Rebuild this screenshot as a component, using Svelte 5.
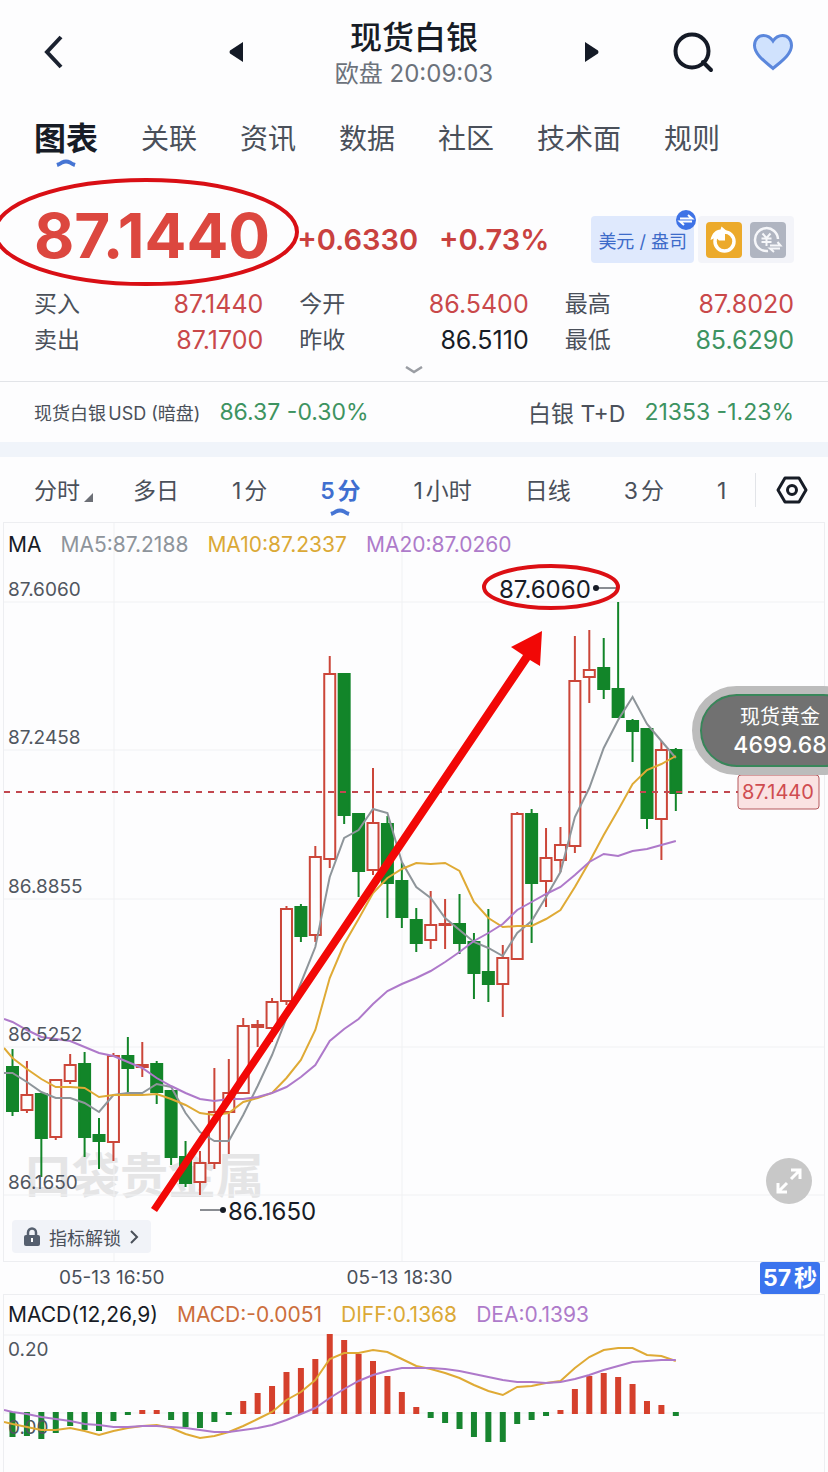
<script lang="ts">
    const tabs = ["图表", "关联", "资讯", "数据", "社区", "技术面", "规则"];
    const periods = ["分时", "多日", "1分", "5分", "1小时", "日线", "3分", "1"];
    let activeTab = $state("图表");
    let activePeriod = $state("5分");

    const quotes = [
        { label: "买入", value: "87.1440", tone: "up" },
        { label: "今开", value: "86.5400", tone: "up" },
        { label: "最高", value: "87.8020", tone: "up" },
        { label: "卖出", value: "87.1700", tone: "up" },
        { label: "昨收", value: "86.5110", tone: "flat" },
        { label: "最低", value: "85.6290", tone: "down" },
    ];

    // x of the first bar and the distance between bars
    const x0 = 12.5;
    const step = 14.42;
    const barX = (i: number) => x0 + i * step;

    // [direction, body top, body bottom, wick top, wick bottom]
    const candles: [string, number, number, number, number][] = [
        ["down", 1067, 1111, 1049, 1116], ["up", 1095, 1110, 1061, 1113], ["down", 1094, 1138, 1094, 1177],
        ["up", 1080, 1137, 1079, 1140], ["up", 1065, 1081, 1054, 1084], ["down", 1064, 1137, 1052, 1157],
        ["down", 1135, 1141, 1118, 1169], ["up", 1056, 1142, 1053, 1161], ["down", 1056, 1068, 1037, 1095],
        ["up", 1065, 1067, 1042, 1077], ["down", 1064, 1092, 1061, 1104], ["down", 1091, 1157, 1091, 1165],
        ["down", 1157, 1183, 1141, 1187], ["up", 1163, 1182, 1151, 1195], ["up", 1112, 1163, 1068, 1169],
        ["up", 1093, 1112, 1059, 1154], ["up", 1026, 1093, 1018, 1094], ["up", 1025, 1027, 1020, 1047],
        ["up", 1002, 1028, 998, 1042], ["up", 909, 1001, 906, 1005], ["down", 907, 936, 904, 942],
        ["up", 857, 935, 846, 942], ["up", 674, 859, 656, 868], ["down", 674, 815, 674, 824],
        ["down", 814, 871, 814, 897], ["up", 823, 870, 768, 875], ["down", 824, 883, 816, 918],
        ["down", 881, 917, 862, 928], ["down", 920, 943, 908, 952], ["up", 925, 940, 891, 949],
        ["up", 924, 925, 899, 949], ["down", 924, 943, 894, 954], ["down", 942, 973, 933, 999],
        ["down", 972, 984, 909, 1002], ["up", 958, 984, 945, 1017], ["up", 814, 959, 812, 960],
        ["down", 814, 883, 809, 943], ["up", 858, 881, 828, 907], ["up", 845, 860, 827, 872],
        ["up", 681, 846, 636, 853], ["up", 670, 677, 630, 703], ["down", 668, 689, 638, 699],
        ["down", 689, 717, 602, 717], ["down", 721, 731, 719, 762], ["down", 729, 818, 729, 829],
        ["up", 750, 819, 741, 860], ["down", 750, 793, 748, 811],
    ];

    const ma5 = [
        1073, 1082, 1092, 1098, 1098, 1103, 1112, 1095, 1093, 1093, 1084, 1087, 1113, 1132, 1141, 1141,
        1115, 1086, 1055, 1018, 983, 947, 877, 838, 830, 809, 813, 862, 887, 898, 918, 930, 942, 948, 956,
        933, 921, 897, 872, 817, 788, 748, 720, 697, 724, 741, 758,
    ];
    const ma10 = [
        1058, 1069, 1079, 1087, 1087, 1088, 1097, 1095, 1095, 1095, 1094, 1099, 1105, 1113, 1115, 1113,
        1102, 1098, 1093, 1078, 1060, 1030, 978, 944, 919, 893, 878, 869, 863, 864, 863, 871, 902, 918, 927,
        926, 926, 919, 910, 887, 862, 835, 810, 784, 770, 764, 756,
    ];
    const ma20 = [
        1022, 1030, 1037, 1039, 1041, 1047, 1053, 1056, 1062, 1068, 1078, 1086, 1093, 1099, 1101, 1099,
        1099, 1097, 1093, 1087, 1077, 1065, 1041, 1029, 1019, 1004, 991, 984, 978, 971, 962, 952, 941, 933,
        924, 910, 902, 894, 887, 875, 862, 854, 856, 851, 849, 845, 841,
    ];

    // far end of each histogram bar; below the base line is negative
    const base = 1413;
    const macd = [
        1437, 1436, 1439, 1433, 1426, 1430, 1431, 1421, 1415, 1410, 1410, 1420, 1427, 1428, 1422, 1415,
        1401, 1393, 1386, 1372, 1368, 1359, 1334, 1340, 1354, 1361, 1376, 1392, 1407, 1418, 1423, 1429,
        1437, 1442, 1442, 1424, 1420, 1416, 1410, 1389, 1376, 1373, 1377, 1384, 1401, 1405, 1416,
    ];
    const diff = [
        1424, 1427, 1430, 1430, 1428, 1431, 1435, 1431, 1428, 1426, 1425, 1428, 1434, 1438, 1436, 1432,
        1426, 1419, 1412, 1400, 1392, 1380, 1359, 1353, 1353, 1350, 1352, 1359, 1366, 1369, 1373, 1378,
        1385, 1391, 1395, 1387, 1386, 1383, 1381, 1368, 1357, 1350, 1348, 1348, 1355, 1356, 1361,
    ];
    const dea = [
        1412, 1414, 1417, 1419, 1421, 1424, 1425, 1427, 1427, 1426, 1426, 1427, 1428, 1430, 1432, 1432,
        1430, 1428, 1425, 1420, 1414, 1408, 1398, 1389, 1381, 1375, 1371, 1368, 1368, 1368, 1369, 1371,
        1374, 1377, 1380, 1382, 1382, 1383, 1382, 1379, 1375, 1370, 1366, 1362, 1361, 1360, 1360,
    ];

    function line(first: number, ys: number[]) {
        return `4,${first} ` + ys.map((y, i) => `${barX(i)},${y}`).join(" ");
    }

    const priceAxis = [
        { y: 602, label: "87.6060" },
        { y: 750, label: "87.2458" },
        { y: 899, label: "86.8855" },
        { y: 1047, label: "86.5252" },
        { y: 1195, label: "86.1650" },
    ];
</script>

<div class="page">
    <header class="topbar">
        <button class="icon-btn back" aria-label="返回">
            <svg width="40" height="40" viewBox="0 0 40 40"><path d="M27 5 13 20l14 15" fill="none" stroke="#1b2230" stroke-width="4" /></svg>
        </button>
        <div class="switcher">
            <button class="icon-btn" aria-label="上一个">
                <svg width="14" height="20" viewBox="0 0 14 20"><path d="M14 0v20L1 11.500q-1-1.500 0-3z" fill="#141a26" /></svg>
            </button>
            <div class="title">
                <h1>现货白银</h1>
                <p>欧盘 20:09:03</p>
            </div>
            <button class="icon-btn" aria-label="下一个">
                <svg width="14" height="20" viewBox="0 0 14 20"><path d="M0 0v20l13-8.500q1-1.500 0-3z" fill="#141a26" /></svg>
            </button>
        </div>
        <div class="actions">
            <button class="icon-btn" aria-label="搜索">
                <svg width="42" height="42" viewBox="0 0 42 42" fill="none" stroke="#141a26" stroke-width="4">
                    <circle cx="20" cy="20" r="16.500" />
                    <path d="m31 31 8 8" stroke-linecap="round" />
                </svg>
            </button>
            <button class="icon-btn" aria-label="收藏">
                <svg width="42" height="38" viewBox="0 0 42 38">
                    <path d="M21 35.500C15 30 2.500 22 2.500 12.500 2.500 6.500 6.500 2.500 11.500 2.500c4.500 0 7.500 2.500 9.500 5.500 2-3 5-5.500 9.500-5.500 5 0 9 4 9 10C39.500 22 27 30 21 35.500z" fill="#d0e2fd" stroke="#5b87dc" stroke-width="3" />
                </svg>
            </button>
        </div>
    </header>

    <nav class="tabs">
        {#each tabs as tab}
            <button class:active={tab === activeTab} onclick={() => (activeTab = tab)}>
                {tab}
                {#if tab === activeTab}
                    <svg class="mark" width="22" height="9" viewBox="0 0 22 9"><path d="M2 7q3-1 5-2.500 4-2 8 0Q17 6 20 7" /></svg>
                {/if}
            </button>
        {/each}
    </nav>

    <section class="quote">
        <div class="price-row">
            <div class="last">
                87.1440
                <svg class="ring" width="308" height="112" viewBox="0 0 308 112"><ellipse cx="154" cy="56" rx="151" ry="52" /></svg>
            </div>
            <div class="change">+0.6330</div>
            <div class="change">+0.73%</div>
            <div class="tools">
                <button class="unit">
                    美元 / 盎司
                    <svg class="swap" width="20" height="20" viewBox="0 0 20 20">
                        <circle cx="10" cy="10" r="10" fill="#3f73e6" />
                        <path d="M4 8.500h12L12 5M16 11.500H4l4 3.500" fill="none" stroke="#fff" stroke-width="2" />
                    </svg>
                </button>
                <div class="modes">
                    <button class="icon-btn" aria-label="走势">
                        <svg width="36" height="36" viewBox="0 0 36 36">
                            <rect width="36" height="36" rx="4" fill="#ecaa2b" />
                            <circle cx="18.500" cy="19.500" r="9.500" fill="none" stroke="#fff" stroke-width="3.500" />
                            <path d="M4.500 18C6 11 10 7.500 14.500 7.500l1-3L22 10l-3 2v6.500h-6l-3-3z" fill="#fff" />
                        </svg>
                    </button>
                    <button class="icon-btn" aria-label="人民币">
                        <svg width="36" height="36" viewBox="0 0 36 36" fill="none" stroke="#f6f7fa" stroke-width="2.500">
                            <rect width="36" height="36" rx="4" fill="#b0b5c1" stroke="none" />
                            <path d="M28 17A11.500 11.500 0 1 0 18 29" />
                            <path d="m12.500 11.500 4 4.500 4-4.500M11.500 16.500h10M11.500 20h10M16.500 16v8" stroke-width="2" />
                            <path d="M20 23.500h10.500L27.500 20M30 26.500H20l4 3.500" stroke-width="2" />
                        </svg>
                    </button>
                </div>
            </div>
        </div>
        <dl class="quotes">
            {#each quotes as q}
                <div>
                    <dt>{q.label}</dt>
                    <dd class={q.tone}>{q.value}</dd>
                </div>
            {/each}
        </dl>
        <button class="icon-btn more" aria-label="展开">
            <svg width="20" height="8" viewBox="0 0 20 8"><path d="m2 1 8 5 8-5" fill="none" stroke="#9a9da3" stroke-width="2.500" /></svg>
        </button>
    </section>

    <section class="related">
        <a href="#usd"><span class="small">现货白银USD (暗盘)</span><span class="down">86.37 -0.30%</span></a>
        <a href="#td"><span>白银 T+D</span><span class="down">21353 -1.23%</span></a>
    </section>

    <nav class="periods">
        <div class="period-list">
            {#each periods as p, i}
                <button class:active={p === activePeriod} onclick={() => (activePeriod = p)}>
                    {p}
                    {#if i === 0}
                        <svg class="corner" width="9" height="9" viewBox="0 0 9 9"><path d="M9 0v9H0z" fill="#6c6f76" /></svg>
                    {/if}
                    {#if p === activePeriod}
                        <svg class="mark" width="22" height="9" viewBox="0 0 22 9"><path d="M2 7q3-1 5-2.500 4-2 8 0Q17 6 20 7" /></svg>
                    {/if}
                </button>
            {/each}
        </div>
        <button class="icon-btn settings" aria-label="设置">
            <svg width="32" height="28" viewBox="0 0 32 28" fill="none" stroke="#171c26" stroke-width="3">
                <path d="M9 2h14l7 12-7 12H9L2 14z" stroke-linejoin="round" />
                <circle cx="16" cy="14" r="4.500" />
            </svg>
        </button>
    </nav>

    <section class="chart">
        <svg class="plot" viewBox="4 523 820 738">
            <text class="watermark" x="24" y="1193">口袋贵金属</text>
            {#each priceAxis as tick}
                <line class="grid" x1="4" x2="824" y1={tick.y} y2={tick.y} />
            {/each}
            <line class="grid" x1="114" x2="114" y1="523" y2="1261" />
            <line class="grid" x1="402" x2="402" y1="523" y2="1261" />
            {#each candles as [dir, top, bottom, high, low], i}
                <g class="candle {dir}">
                    <line x1={barX(i)} x2={barX(i)} y1={high} y2={low} />
                    <rect x={barX(i) - 5.5} y={top} width="11" height={bottom - top} />
                </g>
            {/each}
            <line class="last-line" x1="4" x2="738" y1="792" y2="792" />
            <polyline class="line gray" points={line(1073, ma5)} />
            <polyline class="line gold" points={line(1048, ma10)} />
            <polyline class="line violet" points={line(1019, ma20)} />
            {#each priceAxis as tick}
                <text class="tick" x="8" y={tick.y - 6}>{tick.label}</text>
            {/each}

            <text class="extreme" x="499" y="598">87.6060</text>
            <circle cx="596" cy="588" r="3" fill="#171c26" />
            <line x1="596" x2="618" y1="588" y2="588" stroke="#171c26" />
            <line x1="200" x2="223" y1="1210" y2="1210" stroke="#171c26" />
            <circle cx="223" cy="1210" r="3" fill="#171c26" />
            <text class="extreme" x="228" y="1220">86.1650</text>

            <rect x="738" y="775" width="81" height="34" rx="3" fill="#fae2e2" stroke="#b5595d" />
            <text class="last-tag" x="778" y="799">87.1440</text>

            <ellipse cx="551" cy="587" rx="67" ry="21" fill="none" stroke="#dc0f14" stroke-width="4" />
            <path d="M151 1208 523 655l-12-8 31-16-2 35-10-6L157 1212z" fill="#f20806" />
        </svg>
        <div class="legend">
            <span>MA</span>
            <span class="gray">MA5:87.2188</span>
            <span class="gold">MA10:87.2337</span>
            <span class="violet">MA20:87.0260</span>
        </div>
        <button class="unlock">
            <svg width="16" height="20" viewBox="0 0 16 20">
                <path d="M4 9V5.500a4 4 0 0 1 8 0V9" fill="none" stroke="#56606f" stroke-width="2.500" />
                <rect y="8" width="16" height="11" rx="2" fill="#56606f" />
                <path d="M8 11v4" stroke="#fff" stroke-width="2" />
            </svg>
            指标解锁
            <svg width="9" height="14" viewBox="0 0 9 14"><path d="m1 1 6 6-6 6" fill="none" stroke="#4a505a" stroke-width="2" /></svg>
        </button>
        <button class="icon-btn expand" aria-label="全屏">
            <svg width="26" height="26" viewBox="0 0 26 26" fill="none" stroke="#fff" stroke-width="3">
                <path d="M15 11 24 2M15 2h9v9M11 15l-9 9M2 15v9h9" />
            </svg>
        </button>
        <button class="floating">
            <span>现货黄金</span>
            <strong>4699.68</strong>
        </button>
    </section>

    <div class="time-axis">
        <span>05-13 16:50</span>
        <span>05-13 18:30</span>
        <strong class="countdown">57秒</strong>
    </div>

    <section class="chart macd">
        <svg class="plot" viewBox="4 1295 820 177">
            <line class="grid" x1="4" x2="824" y1="1335" y2="1335" />
            <line class="grid" x1="4" x2="824" y1={base} y2={base} />
            {#each macd as y, i}
                {#if y < base}
                    <rect class="bar up" x={barX(i) - 3} y={y} width="6" height={base + 1 - y} />
                {:else}
                    <rect class="bar down" x={barX(i) - 3} y={base - 1} width="6" height={y - base + 1} />
                {/if}
            {/each}
            <text class="tick" x="8" y="1356">0.20</text>
            <text class="tick" x="8" y="1434">0.00</text>
            <polyline class="line gold" points={line(1422, diff)} />
            <polyline class="line violet" points={line(1410, dea)} />
        </svg>
        <div class="legend">
            <span>MACD(12,26,9)</span>
            <span class="orange">MACD:-0.0051</span>
            <span class="gold">DIFF:0.1368</span>
            <span class="violet">DEA:0.1393</span>
        </div>
    </section>
</div>

<style>
    :global(body) {
        margin: 0;
        background: #fdfdfe;
    }
    .page {
        overflow: hidden;
        font-family: Inter, "Noto Sans CJK SC", sans-serif;
        text-autospace: normal;
        color: #4a505a;
    }
    button {
        border: 0;
        padding: 0;
        background: none;
        font: inherit;
        color: inherit;
        cursor: pointer;
    }
    svg {
        display: block;
    }
    .icon-btn {
        display: flex;
        align-items: center;
        justify-content: center;
    }
    .up {
        color: #c9484a;
    }
    .down {
        color: #3d9361;
    }
    .flat {
        color: #171c26;
    }

    .topbar {
        display: grid;
        grid-template-columns: 1fr auto 1fr;
        align-items: center;
        height: 104px;
        padding: 0 34px;
    }
    .back {
        justify-self: start;
    }
    .switcher {
        display: flex;
        align-items: center;
        justify-content: space-between;
        width: 370px;
    }
    .title {
        padding-top: 6px;
        text-align: center;
    }
    .title h1 {
        margin: 0;
        font-size: 32px;
        line-height: 38px;
        font-weight: 500;
        color: #171c26;
    }
    .title p {
        margin: 0;
        font-size: 24px;
        line-height: 34px;
        color: #6c727b;
    }
    .actions {
        display: flex;
        justify-content: flex-end;
        gap: 38px;
    }

    .tabs {
        display: flex;
        align-items: center;
        gap: 43px;
        height: 70px;
        padding: 0 34px;
        font-size: 28px;
        line-height: 40px;
    }
    .tabs button,
    .period-list button {
        position: relative;
        white-space: nowrap;
    }
    .tabs .active {
        font-size: 32px;
        font-weight: 700;
        color: #171c26;
    }
    .mark {
        position: absolute;
        left: 50%;
        bottom: -8px;
        margin-left: -11px;
        fill: none;
        stroke: #4675d4;
        stroke-width: 4;
    }

    .quote {
        padding: 0 34px;
        border-bottom: 1px solid #e2e4e8;
    }
    .price-row {
        display: flex;
        align-items: center;
        height: 112px;
        padding-top: 19px;
        box-sizing: border-box;
    }
    .last {
        position: relative;
        margin-right: 27px;
        padding-bottom: 8px;
        font-size: 62px;
        line-height: 80px;
        font-weight: 700;
        color: #dc473f;
    }
    .ring {
        position: absolute;
        left: -42px;
        top: -20px;
        fill: none;
        stroke: #d90f15;
        stroke-width: 4;
    }
    .change {
        margin-right: 21px;
        font-size: 29px;
        font-weight: 600;
        color: #c9413f;
    }
    .tools {
        display: flex;
        gap: 4px;
        margin-left: auto;
    }
    .unit {
        position: relative;
        height: 47px;
        padding: 0 7px;
        border-radius: 4px;
        background: #dfe9fd;
        font-size: 18px;
        color: #3d6bc9;
        white-space: nowrap;
    }
    .swap {
        position: absolute;
        top: -6px;
        right: -2px;
    }
    .modes {
        display: flex;
        gap: 8px;
        padding: 0 8px;
        border-radius: 4px;
        background: #f3f4f9;
    }
    .quotes {
        display: grid;
        grid-template-columns: repeat(3, 1fr);
        column-gap: 36px;
        margin: 0;
        font-size: 23px;
        line-height: 36px;
    }
    .quotes div {
        display: flex;
        justify-content: space-between;
    }
    .quotes dd {
        margin: 0;
        font-size: 25px;
    }
    .more {
        width: 100%;
        height: 23px;
    }

    .related {
        display: flex;
        align-items: center;
        justify-content: space-between;
        height: 60px;
        padding: 0 34px;
        border-bottom: 15px solid #f0f4fa;
        font-size: 23px;
    }
    .related a {
        display: flex;
        align-items: center;
        gap: 19px;
        color: inherit;
        text-decoration: none;
    }
    .related .down {
        color: #3d9361;
    }
    .related .small {
        font-size: 18px;
    }

    .periods {
        display: flex;
        align-items: center;
        height: 66px;
        padding-left: 34px;
        font-size: 23px;
        line-height: 34px;
    }
    .period-list {
        display: flex;
        flex: 1;
        gap: 53px;
        overflow: hidden;
        padding: 14px 0 12px;
    }
    .period-list .active {
        font-weight: 600;
        color: #3f6fd0;
    }
    .corner {
        position: absolute;
        right: -13px;
        bottom: 6px;
    }
    .settings {
        width: 73px;
        height: 34px;
        border-left: 1px solid #e2e4e8;
    }

    .chart {
        position: relative;
        margin: 0 4px;
        box-shadow: 0 0 0 1px #edeef1;
    }
    .plot {
        width: 100%;
        height: auto;
    }
    .legend {
        position: absolute;
        top: 8px;
        left: 4px;
        display: flex;
        gap: 19px;
        font-size: 21px;
        line-height: 28px;
        color: #171c26;
    }
    .legend .gray {
        color: #8e949b;
    }
    .legend .gold {
        color: #dba936;
    }
    .legend .violet {
        color: #ae7bca;
    }
    .legend .orange {
        color: #cc6e3c;
    }
    .grid {
        stroke: #f0f1f3;
    }
    .last-line {
        stroke: #c2474f;
        stroke-width: 2;
        stroke-dasharray: 6 6;
    }
    .candle {
        stroke-width: 2;
    }
    .candle.up {
        stroke: #cb4639;
        fill: #fdfdfe;
    }
    .candle.down {
        stroke: #128529;
        fill: #128529;
    }
    .bar.up {
        fill: #d5402c;
    }
    .bar.down {
        fill: #17852f;
    }
    .line {
        fill: none;
        stroke-width: 2;
    }
    .line.gray {
        stroke: #8e959a;
    }
    .line.gold {
        stroke: #dfaa35;
    }
    .line.violet {
        stroke: #ae79ca;
    }
    .tick {
        font-size: 19px;
        fill: #50565f;
    }
    .extreme {
        font-size: 24px;
        fill: #171c26;
    }
    .last-tag {
        font-size: 20px;
        text-anchor: middle;
        fill: #cf4c50;
    }
    .watermark {
        font-size: 48px;
        font-weight: 700;
        fill: #e5e5e6;
    }
    .unlock {
        position: absolute;
        left: 8px;
        bottom: 8px;
        display: flex;
        align-items: center;
        gap: 9px;
        height: 33px;
        padding: 0 12px;
        border-radius: 4px;
        background: #f1f3f8;
        font-size: 18px;
    }
    .expand {
        position: absolute;
        right: 12px;
        bottom: 57px;
        width: 46px;
        height: 46px;
        border-radius: 50%;
        background: #c8c8c8;
    }
    .floating {
        position: absolute;
        top: 163px;
        right: -44px;
        display: flex;
        flex-direction: column;
        align-items: center;
        justify-content: center;
        width: 176px;
        height: 89px;
        padding: 0 32px;
        border: 8px solid #bcbcbc;
        border-radius: 45px;
        background: #717171;
        box-shadow: inset 0 0 0 2px #38875a;
        box-sizing: border-box;
        font-size: 20px;
        line-height: 28px;
        color: #fff;
    }
    .floating strong {
        font-size: 23px;
        font-weight: 500;
    }

    .time-axis {
        display: flex;
        align-items: center;
        gap: 182px;
        height: 34px;
        padding: 0 4px 0 59px;
        font-size: 19px;
        line-height: 28px;
    }
    .countdown {
        margin: 0 4px 0 auto;
        padding: 0 3px;
        border-radius: 3px;
        background: #3b74ee;
        font-size: 23px;
        line-height: 32px;
        font-weight: 700;
        color: #fff;
    }
    .macd .legend {
        top: 6px;
    }
</style>
